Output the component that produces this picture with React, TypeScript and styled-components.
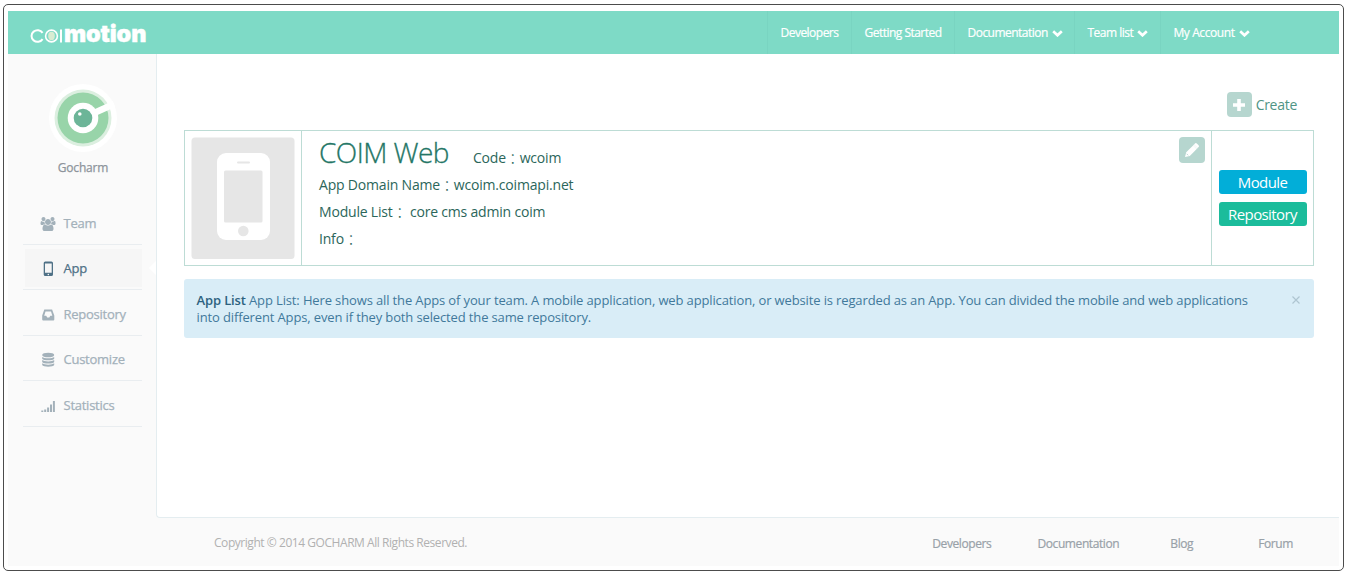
import React from 'react';
import styled, { createGlobalStyle } from 'styled-components';

const GlobalStyle = createGlobalStyle`
  * { box-sizing: border-box; }
  body {
    margin: 0;
    background: #fff;
    font-family: "Open Sans", "Noto Sans CJK TC", sans-serif;
  }
`;

const Frame = styled.div`
  width: 1341px;
  height: 567px;
  margin: 4px 0 0 3px;
  padding: 6px 4px 4px;
  border: 1px solid #4c4c4c;
  border-radius: 5px;
`;

const Shell = styled.div`
  width: 1331px;
  height: 555px;
  display: flex;
  flex-direction: column;
  background: #fafafa;
`;

const Header = styled.header`
  height: 43px;
  flex: none;
  display: flex;
  justify-content: space-between;
  align-items: stretch;
  background: #7edac6;
`;

const Logo = styled.div`
  display: flex;
  align-items: center;
  padding: 2px 0 0 22px;
  color: #fff;
`;

const LogoMark = styled.svg`
  display: block;
  margin-top: 4px;
`;

const LogoWord = styled.span`
  font: 900 23.500px/26px Inter, sans-serif;
  letter-spacing: -0.15px;
  -webkit-text-stroke: 0.4px #fff;
`;

const Nav = styled.nav`
  display: flex;
  margin-right: 78px;
`;

const NavItem = styled.a<{ $width: number; $spacing?: number }>`
  width: ${(p) => p.$width}px;
  display: flex;
  align-items: center;
  gap: 4px;
  padding: 0 0 0 12.500px;
  border-left: 1px solid #79d4c1;
  color: #fff;
  font-size: 12px;
  font-weight: 500;
  letter-spacing: ${(p) => p.$spacing ?? -0.52}px;
  white-space: nowrap;
  -webkit-text-stroke: 0.2px #fff;
`;

const Body = styled.div`
  display: flex;
  height: 464px;
  flex: none;
`;

const Sidebar = styled.aside`
  width: 148px;
  display: flex;
  flex-direction: column;
  align-items: center;
`;

const Avatar = styled.svg`
  flex: none;
  margin: 29px 0 0 2px;
`;

const TeamName = styled.div`
  margin: 6px 0 0 2px;
  height: 18px;
  color: #8d949b;
  font-size: 12px;
  line-height: 18px;
  letter-spacing: -0.2px;
  -webkit-text-stroke: 0.25px #8d949b;
`;

const Menu = styled.ul`
  list-style: none;
  width: 119px;
  margin: 22px 0 0;
  padding: 0;
`;

const MenuItem = styled.li<{ $active?: boolean }>`
  position: relative;
  height: 45.5px;
  padding: 4px 0 2px 2px;
  border-bottom: 1px solid #e9edf0;
  color: ${(p) => (p.$active ? '#4f7186' : '#a3b1ba')};
`;

const MenuLink = styled.a<{ $active?: boolean }>`
  display: flex;
  align-items: center;
  height: 38px;
  padding: 1px 0 0 15px;
  background: ${(p) => (p.$active ? '#f6f6f6' : 'transparent')};
  font-size: 13px;
  letter-spacing: -0.25px;
  -webkit-text-stroke: 0.25px currentColor;

  svg { width: 16px; height: 16px; margin: 2px 8px 0 0; }
`;

const Pointer = styled.span`
  position: absolute;
  right: -14px;
  top: 16px;
  border: solid transparent;
  border-width: 7px 7px 7px 0;
  border-right-color: #fff;
`;

const Main = styled.main`
  width: 1183px;
  padding: 38px 25px 0 27px;
  border: solid #e4edf0;
  border-width: 0 0 1px 1px;
  border-bottom-left-radius: 4px;
  background: #fff;
`;

const Actions = styled.div`
  display: flex;
  justify-content: flex-end;
  height: 38px;
  padding-right: 17px;
`;

const CreateLink = styled.a`
  display: flex;
  align-items: center;
  gap: 4px;
  height: 25px;
  color: #4f9585;
  font-size: 14px;
  letter-spacing: -0.28px;
`;

const IconBox = styled.span<{ $size: number }>`
  display: flex;
  align-items: center;
  justify-content: center;
  width: ${(p) => p.$size}px;
  height: ${(p) => p.$size}px;
  border-radius: 4px;
  background: #b6d6cf;
`;

const Card = styled.section`
  display: flex;
  height: 136px;
  border: 1px solid #bddcd5;
`;

const Thumb = styled.div`
  width: 117px;
  padding: 6px 0 0 6px;
  border-right: 1px solid #bddcd5;
`;

const Details = styled.div`
  flex: 1;
  padding: 2px 0 0 17px;
  color: #2b665a;
  font-size: 14px;
  letter-spacing: -0.19px;
`;

const TitleRow = styled.div`
  display: flex;
  align-items: baseline;
  gap: 24px;
  height: 38px;
`;

const Title = styled.h1`
  margin: 0;
  color: #247666;
  font-size: 28px;
  line-height: 38px;
  font-weight: 300;
  letter-spacing: -0.55px;
  -webkit-text-stroke: 0.3px #247666;
`;

const Field = styled.p`
  margin: 0;
  height: 27px;
  line-height: 27px;
  white-space: pre;
`;

const Colon = styled.span`
  position: relative;
  top: 0.500px;
  line-height: 1;
  font-weight: 300;
`;

const EditCell = styled.div`
  width: 32px;
  padding-top: 6px;
`;

const CardActions = styled.div`
  width: 102px;
  display: flex;
  flex-direction: column;
  align-items: center;
  justify-content: center;
  gap: 8px;
  border-left: 1px solid #bddcd5;
`;

const Button = styled.button<{ $color: string }>`
  width: 88px;
  height: 24px;
  padding: 0;
  border: 0;
  border-radius: 3px;
  background: ${(p) => p.$color};
  color: #fff;
  font: 400 15px/23px "Open Sans", sans-serif;
  letter-spacing: -0.6px;
`;

const Alert = styled.div`
  display: flex;
  justify-content: space-between;
  height: 59px;
  margin-top: 13px;
  padding: 13px 13px 0 12.500px;
  border-radius: 3px;
  background: #d9edf7;
  color: #41799b;
  font-size: 13px;
  line-height: 17px;
  letter-spacing: -0.132px;
  white-space: nowrap;

  strong { color: #2d627f; font-weight: 600; }
`;

const CloseIcon = styled.svg`
  margin-top: 3px;
`;

const Footer = styled.footer`
  flex: 1;
  display: flex;
  justify-content: space-between;
  padding: 16px 46px 0 206px;
  font-size: 12px;
  line-height: 18px;
  color: #b1b1b1;
`;

const Copyright = styled.span`
  letter-spacing: -0.45px;
`;

const FooterLinks = styled.div`
  display: flex;
  padding-top: 1px;
  gap: 46px;
  color: #98a1a8;
  letter-spacing: -0.4px;
  -webkit-text-stroke: 0.2px #98a1a8;
`;

const FooterLink = styled.a<{ $gap?: number }>`
  margin-left: ${(p) => p.$gap ?? 0}px;
`;

const Chevron = () => (
  <svg width="11" height="8" viewBox="0 0 11 8">
    <path d="M1.200 2.300l4.300 4 4.300-4" fill="none" stroke="#fff" strokeWidth="2.700" />
  </svg>
);

const TeamIcon = () => (
  <svg viewBox="0 0 2048 1792" fill="currentColor">
    <path d="M657 896q-162 5-265 128h-134q-82 0-138-40.5t-56-118.5q0-353 124-353 6 0 43.5 21t97.5 42.5 119 21.5q67 0 133-23-5 37-5 66 0 159 93 286zm1071 637q0 120-73 189.5t-194 69.5h-874q-121 0-194-69.5t-73-189.5q0-53 3.5-103.5t14-109 26.5-108.5 43-97.5 62-81 85.5-53.5 111.5-20q10 0 43 21.5t73 48 107 48 135 21.5 135-21.5 107-48 73-48 43-21.5q61 0 111.5 20t85.5 53.5 62 81 43 97.5 26.5 108.5 14 109 3.5 103.5zm-1024-1277q0 106-75 181t-181 75-181-75-75-181 75-181 181-75 181 75 75 181zm704 384q0 159-112.5 271.5t-271.5 112.5-271.5-112.5-112.5-271.5 112.5-271.5 271.5-112.5 271.5 112.5 112.5 271.5zm576 225q0 78-56 118.5t-138 40.5h-134q-103-123-265-128 93-127 93-286 0-29-5-66 66 23 133 23 59 0 119-21.5t97.5-42.5 43.5-21q124 0 124 353zm-128-609q0 106-75 181t-181 75-181-75-75-181 75-181 181-75 181 75 75 181z" />
  </svg>
);

const AppIcon = () => (
  <svg viewBox="0 0 16 16">
    <path fillRule="evenodd" fill="currentColor" d="M5.300.5h6.100A1.600 1.600 0 0 1 13 2.100v11.300a1.600 1.600 0 0 1-1.600 1.600H5.300a1.600 1.600 0 0 1-1.600-1.600V2.100A1.600 1.600 0 0 1 5.300.5zM5 2.500v9.300h6.700V2.500zM8.350 12.700a.8.8 0 1 0 0 1.600.8.8 0 0 0 0-1.600z" />
  </svg>
);

const RepositoryIcon = () => (
  <svg viewBox="0 0 16 16">
    <path fillRule="evenodd" fill="currentColor" d="M4.300 2.500h7.800l2.200 6v4a1 1 0 0 1-1 1H3.200a1 1 0 0 1-1-1v-4zM5.500 4.400 4.200 8.700h2l1 1.900h2.100l1-1.900h2L11 4.400z" />
  </svg>
);

const DatabaseIcon = () => (
  <svg viewBox="0 0 16 16" fill="currentColor">
    <ellipse cx="8.200" cy="3" rx="6" ry="2.300" />
    <path d="M2.200 4.900c2 1.800 10 1.800 12 0v1.800c-1 2.200-11 2.200-12 0zM2.200 8.100c2 1.800 10 1.800 12 0v1.800c-1 2.200-11 2.200-12 0zM2.200 11.300c2 1.800 10 1.800 12 0v1.700c-1 2.200-11 2.200-12 0z" />
  </svg>
);

const StatisticsIcon = () => (
  <svg viewBox="0 0 16 16" fill="currentColor">
    <path d="M1.300 12.500h2V14h-2zM4.200 11.500h2V14h-2zM7.100 9.500h2V14h-2zM10 6.500h2V14h-2zM12.900 3h2v11h-2z" />
  </svg>
);

const menu = [
  { label: 'Team', icon: <TeamIcon /> },
  { label: 'App', icon: <AppIcon />, active: true },
  { label: 'Repository', icon: <RepositoryIcon /> },
  { label: 'Customize', icon: <DatabaseIcon /> },
  { label: 'Statistics', icon: <StatisticsIcon /> },
];

export default function App() {
  return (
    <>
      <GlobalStyle />
      <Frame>
        <Shell>
          <Header>
            <Logo>
              <LogoMark width="34" height="16" viewBox="0 0 34 16">
                <path d="M12.600 4.900A6 5.800 0 1 0 12.600 11.100" fill="none" stroke="#fff" strokeWidth="2" />
                <circle cx="21.500" cy="8" r="5.900" fill="none" stroke="#fff" strokeWidth="1.600" />
                <ellipse cx="21.500" cy="8" rx="3.300" ry="4.200" fill="#d9ecd2" />
                <path d="M31 1.600v12.800" stroke="#fff" strokeWidth="2" />
              </LogoMark>
              <LogoWord>motion</LogoWord>
            </Logo>
            <Nav>
              <NavItem $width={84}>Developers</NavItem>
              <NavItem $width={103}>Getting Started</NavItem>
              <NavItem $width={120}>Documentation<Chevron /></NavItem>
              <NavItem $width={86} $spacing={-0.5}>Team list<Chevron /></NavItem>
              <NavItem $width={101} $spacing={-0.42}>My Account<Chevron /></NavItem>
            </Nav>
          </Header>
          <Body>
            <Sidebar>
              <Avatar width="70" height="70" viewBox="0 0 70 70">
                <circle cx="35" cy="35" r="34" fill="#fff" />
                <circle cx="35" cy="35" r="28.500" fill="#dcefe0" />
                <circle cx="35" cy="35" r="25.500" fill="#98d4a9" />
                <path d="M35 35 66 21" stroke="#fff" strokeWidth="6.500" />
                <circle cx="35" cy="35" r="15.300" fill="#fff" />
                <circle cx="35" cy="35" r="9.300" fill="#6cb598" />
                <circle cx="31.800" cy="31" r="1.800" fill="#fff" />
              </Avatar>
              <TeamName>Gocharm</TeamName>
              <Menu>
                {menu.map((item) => (
                  <MenuItem key={item.label} $active={item.active}>
                    <MenuLink $active={item.active}>{item.icon}{item.label}</MenuLink>
                    {item.active && <Pointer />}
                  </MenuItem>
                ))}
              </Menu>
            </Sidebar>
            <Main>
              <Actions>
                <CreateLink>
                  <IconBox $size={25}>
                    <svg width="14" height="14" viewBox="0 0 14 14">
                      <path d="M7 1v12M1 7h12" stroke="#fff" strokeWidth="3.600" />
                    </svg>
                  </IconBox>
                  Create
                </CreateLink>
              </Actions>
              <Card>
                <Thumb>
                  <svg width="104" height="122" viewBox="0 0 104 122">
                    <rect x="0.500" y="0.500" width="103" height="121.500" rx="3.500" fill="#e6e6e6" />
                    <rect x="26" y="16" width="53" height="87" rx="9" fill="#fff" />
                    <rect x="46" y="24.500" width="13" height="2" rx="1" fill="#e6e6e6" />
                    <rect x="33" y="33.500" width="38.500" height="52" rx="1.500" fill="#e6e6e6" />
                    <circle cx="52.300" cy="94" r="5.300" fill="#e6e6e6" />
                  </svg>
                </Thumb>
                <Details>
                  <TitleRow>
                    <Title>COIM Web</Title>
                    <span>Code<Colon>：</Colon>wcoim</span>
                  </TitleRow>
                  <Field>App Domain Name<Colon>：</Colon>wcoim.coimapi.net</Field>
                  <Field>Module List<Colon>：</Colon> core cms admin coim</Field>
                  <Field>Info<Colon>：</Colon></Field>
                </Details>
                <EditCell>
                  <IconBox $size={26}>
                    <svg width="16" height="16" viewBox="0 0 16 16" fill="#fff">
                      <path d="M1 15l1.200-4.700 6.900-6.900 3.600 3.600-6.900 6.900zM10 2.500l1-1a1.300 1.300 0 0 1 1.800 0l1.800 1.800a1.300 1.300 0 0 1 0 1.800l-1 1z" />
                      <path d="M9 3.400l3.700 3.600 1-1L10 2.400z" />
                      <path d="M2.700 11.800l1.500 1.500" stroke="#b6d6cf" strokeWidth="0.900" />
                    </svg>
                  </IconBox>
                </EditCell>
                <CardActions>
                  <Button $color="#02aed8">Module</Button>
                  <Button $color="#1bbc9b">Repository</Button>
                </CardActions>
              </Card>
              <Alert>
                <div>
                  <strong>App List</strong> App List: Here shows all the Apps of your team. A mobile application, web application, or website is regarded as an App. You can divided the mobile and web applications<br />
                  into different Apps, even if they both selected the same repository.
                </div>
                <CloseIcon width="10" height="10" viewBox="0 0 10 10">
                  <path d="M1.500 1.500l7 7M8.500 1.500l-7 7" stroke="#aec5d1" strokeWidth="1.200" />
                </CloseIcon>
              </Alert>
            </Main>
          </Body>
          <Footer>
            <Copyright>Copyright © 2014 GOCHARM All Rights Reserved.</Copyright>
            <FooterLinks>
              <FooterLink>Developers</FooterLink>
              <FooterLink>Documentation</FooterLink>
              <FooterLink $gap={5}>Blog</FooterLink>
              <FooterLink $gap={19}>Forum</FooterLink>
            </FooterLinks>
          </Footer>
        </Shell>
      </Frame>
    </>
  );
}
